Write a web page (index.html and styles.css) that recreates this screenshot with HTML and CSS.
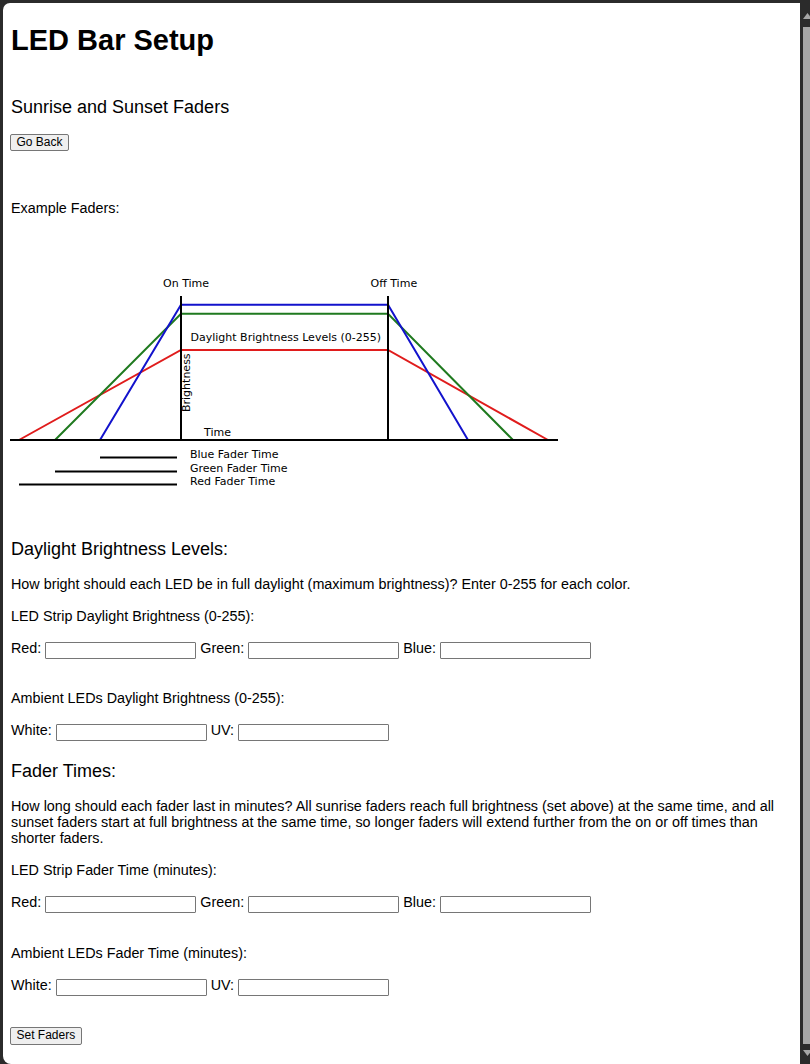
FILE: index.html
```html
<!DOCTYPE html>
<html lang="en">
<head>
<meta charset="utf-8">
<title>LED Bar Setup</title>
<link rel="stylesheet" href="styles.css">
</head>
<body>
<div class="frame">
  <main class="window">
    <div class="content">
      <h1 class="title">LED Bar Setup</h1>
      <h3 class="subtitle">Sunrise and Sunset Faders</h3>
      <button class="btn btn-back" type="button">Go Back</button>
      <p class="text example">Example Faders:</p>

      <svg class="diagram" width="560" height="240" viewBox="0 0 560 240" xmlns="http://www.w3.org/2000/svg">
        <g class="lbl">
          <text x="152" y="26.5">On Time</text>
          <text x="359.5" y="26.5">Off Time</text>
          <text x="179.5" y="80.5">Daylight Brightness Levels (0-255)</text>
          <text x="193" y="175.5">Time</text>
          <text transform="translate(178.5 152) rotate(-90)">Brightness</text>
          <text x="179" y="198">Blue Fader Time</text>
          <text x="179" y="211.5">Green Fader Time</text>
          <text x="179" y="225">Red Fader Time</text>
        </g>
        <g fill="none" stroke-width="2">
          <polyline stroke="#e01c1c" points="8,180 170,90 377,90 537,180"/>
          <polyline stroke="#1f7a1f" points="44,180 170,53.7 377,53.7 502,180"/>
          <polyline stroke="#1212cc" points="89,180 170,44.7 377,44.7 457,180"/>
        </g>
        <g stroke="#000" stroke-width="2">
          <line x1="170" y1="36" x2="170" y2="180"/>
          <line x1="377" y1="36" x2="377" y2="180"/>
          <line x1="-1" y1="180" x2="547" y2="180"/>
          <line x1="89" y1="197.5" x2="166" y2="197.5"/>
          <line x1="44" y1="211.5" x2="166" y2="211.5"/>
          <line x1="8" y1="224.5" x2="166" y2="224.5"/>
        </g>
      </svg>

      <h3 class="section sec-daylight">Daylight Brightness Levels:</h3>
      <p class="text gap-first">How bright should each LED be in full daylight (maximum brightness)? Enter 0-255 for each color.</p>
      <p class="text gap16">LED Strip Daylight Brightness (0-255):</p>
      <div class="row">
        <span class="lab">Red:</span><input class="field" type="text">
        <span class="lab">Green:</span><input class="field" type="text">
        <span class="lab">Blue:</span><input class="field" type="text">
      </div>
      <p class="text gap32">Ambient LEDs Daylight Brightness (0-255):</p>
      <div class="row">
        <span class="lab">White:</span><input class="field" type="text">
        <span class="lab">UV:</span><input class="field" type="text">
      </div>

      <h3 class="section sec-fader">Fader Times:</h3>
      <p class="text gap-para">How long should each fader last in minutes? All sunrise faders reach full brightness (set above) at the same time, and all<br>sunset faders start at full brightness at the same time, so longer faders will extend further from the on or off times than<br>shorter faders.</p>
      <p class="text gap16">LED Strip Fader Time (minutes):</p>
      <div class="row">
        <span class="lab">Red:</span><input class="field" type="text">
        <span class="lab">Green:</span><input class="field" type="text">
        <span class="lab">Blue:</span><input class="field" type="text">
      </div>
      <p class="text gap32">Ambient LEDs Fader Time (minutes):</p>
      <div class="row">
        <span class="lab">White:</span><input class="field" type="text">
        <span class="lab">UV:</span><input class="field" type="text">
      </div>
      <button class="btn btn-set" type="button">Set Faders</button>
    </div>
  </main>
  <div class="scrollbar">
    <svg class="arrow" width="10" height="7" viewBox="0 0 10 7"><polygon points="3,7 7.5,1 12,7" fill="#a6a6a6"/></svg>
    <div class="thumb"></div>
    <svg class="arrow" width="10" height="7" viewBox="0 0 10 7"><polygon points="3,0 7.5,6 12,0" fill="#a6a6a6"/></svg>
  </div>
</div>
</body>
</html>
```

FILE: styles.css
```css
html, body {
  margin: 0;
  padding: 0;
  height: 100%;
  overflow: hidden;
  background: #2b2b2b;
}

.frame {
  display: flex;
  height: 100%;
  padding: 3px 0 0 3px;
  box-sizing: border-box;
}

.window {
  flex: 1;
  background: #ffffff;
  border-radius: 7px 0 0 8px;
  overflow: hidden;
  font-family: "Liberation Sans", Arial, sans-serif;
  color: #000;
}

.content {
  padding: 0 8px;
}

.title {
  margin: 19.5px 0 0;
  font-size: 29px;
  line-height: 34px;
  font-weight: bold;
}

.subtitle,
.section {
  margin: 0;
  font-size: 18px;
  line-height: 21px;
  font-weight: normal;
}

.subtitle { margin-top: 40.8px; }
.sec-daylight { margin-top: 39.3px; }
.sec-fader { margin-top: 20.3px; }

.btn {
  display: block;
  height: 17px;
  padding: 0 5.5px;
  margin: 0;
  font-family: "Liberation Sans", Arial, sans-serif;
  font-size: 12px;
  line-height: 15px;
  color: #000;
  background: #efefef;
  border: 1px solid #767676;
  border-radius: 2px;
  box-sizing: border-box;
}

.btn-back { margin-top: 16px; margin-left: -1px; }
.btn-set { margin-top: 31px; margin-left: -1px; height: 18px; }

.text {
  margin: 0;
  font-size: 14.35px;
  line-height: 16px;
  white-space: nowrap;
}

.example { margin-top: 48.5px; }
.gap-first { margin-top: 15.7px; }
.gap-para { margin-top: 15.7px; }
.gap16 { margin-top: 16px; }
.gap32 { margin-top: 31.5px; }

.diagram {
  display: block;
  margin-top: 43.8px;
  overflow: visible;
}

.lbl {
  font-family: "DejaVu Sans", Verdana, sans-serif;
  font-size: 11px;
  fill: #000;
}

.row {
  display: flex;
  align-items: flex-start;
  gap: 4px;
  margin-top: 16px;
  font-size: 14.35px;
  line-height: 16px;
}

.lab {
  white-space: nowrap;
}

.field {
  width: 151px;
  height: 17px;
  margin: 2px 0 0;
  padding: 1px 2px;
  box-sizing: border-box;
  font-family: "Liberation Sans", Arial, sans-serif;
  font-size: 13.33px;
  border: 1px solid #767676;
  border-radius: 1px;
  background: #fff;
}

.scrollbar {
  width: 10px;
  margin-top: -3px;
  display: flex;
  flex-direction: column;
  background: #2b2b2b;
}

.arrow {
  display: block;
  flex: none;
  margin-top: 12px;
}

.thumb {
  flex: 1;
  margin: 8px 0 6px 3px;
  background: #a6a6a6;
}

.scrollbar .arrow:last-child {
  margin: 0 0 7px;
}
```
